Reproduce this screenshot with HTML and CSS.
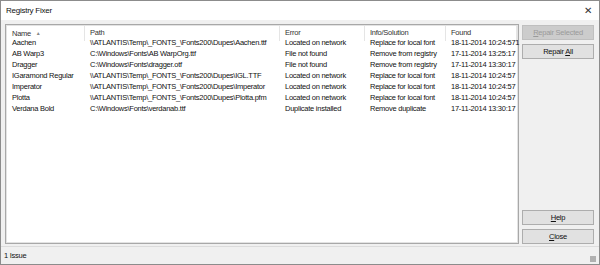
FILE: index.html
```html
<!DOCTYPE html>
<html lang="en">

<head>
    <meta charset="UTF-8">
    <title>Registry Fixer</title>
    <link rel="stylesheet" href="styles.css">
</head>

<body>
    <div class="window">
        <div class="title-bar">
            <span class="title">Registry Fixer</span>
            <span class="close-x">&#x2715;</span>
        </div>

        <div class="main">
            <div class="list-box">
                <div class="grid">
                    <div class="hd">Name <span class="sort">&#x25B2;</span></div>
                    <div class="hd">Path</div>
                    <div class="hd">Error</div>
                    <div class="hd">Info/Solution</div>
                    <div class="hd">Found</div>

                    <div>Aachen</div>
                    <div>\\ATLANTIS\Temp\_FONTS_\Fonts200\Dupes\Aachen.ttf</div>
                    <div>Located on network</div>
                    <div>Replace for local font</div>
                    <div>18-11-2014 10:24:571</div>

                    <div>AB Warp3</div>
                    <div>C:\Windows\Fonts\AB WarpOrg.ttf</div>
                    <div>File not found</div>
                    <div>Remove from registry</div>
                    <div>17-11-2014 13:25:17</div>

                    <div>Dragger</div>
                    <div>C:\Windows\Fonts\dragger.otf</div>
                    <div>File not found</div>
                    <div>Remove from registry</div>
                    <div>17-11-2014 13:30:17</div>

                    <div>IGaramond Regular</div>
                    <div>\\ATLANTIS\Temp\_FONTS_\Fonts200\Dupes\IGL.TTF</div>
                    <div>Located on network</div>
                    <div>Replace for local font</div>
                    <div>18-11-2014 10:24:57</div>

                    <div>Imperator</div>
                    <div>\\ATLANTIS\Temp\_FONTS_\Fonts200\Dupes\Imperator</div>
                    <div>Located on network</div>
                    <div>Replace for local font</div>
                    <div>18-11-2014 10:24:57</div>

                    <div>Plotta</div>
                    <div>\\ATLANTIS\Temp\_FONTS_\Fonts200\Dupes\Plotta.pfm</div>
                    <div>Located on network</div>
                    <div>Replace for local font</div>
                    <div>18-11-2014 10:24:57</div>

                    <div>Verdana Bold</div>
                    <div>C:\Windows\Fonts\verdanab.ttf</div>
                    <div>Duplicate installed</div>
                    <div>Remove duplicate</div>
                    <div>17-11-2014 13:30:17</div>
                </div>
            </div>

            <div class="side">
                <button class="btn" disabled><u>R</u>epair Selected</button>
                <button class="btn">Repair <u>A</u>ll</button>
                <div class="spacer"></div>
                <button class="btn"><u>H</u>elp</button>
                <button class="btn"><u>C</u>lose</button>
            </div>
        </div>

        <div class="status-bar">
            <span>1 Issue</span>
            <span class="grip"></span>
        </div>
    </div>
</body>

</html>
```

FILE: styles.css
```css
/* Window frame */
body {
    margin: 0;
    font-family: "Liberation Sans", Arial, sans-serif;
    font-size: 7.5px;
    letter-spacing: -0.25px;
    color: #111;
}

.window {
    width: 600px;
    height: 265px;
    box-sizing: border-box;
    border: 1px solid #8c8c8c;
    background: #f0f0f0;
    display: flex;
    flex-direction: column;
}

.title-bar {
    height: 19px;
    background: #fff;
    display: flex;
    align-items: center;
    justify-content: space-between;
    padding: 0 7px 0 5px;
    font-size: 8px;
}

.close-x {
    font-size: 10px;
    color: #333;
}

/* Main area */
.main {
    flex: 1;
    display: flex;
    gap: 3px;
    padding: 4px 5px 2px 4px;
}

.list-box {
    flex: 1;
    background: #fff;
    border: 1px solid #a8a8a8;
    box-shadow: inset 0 0 0 1px #e3e3e3;
    padding: 1px;
}

.grid {
    display: grid;
    grid-template-columns: 78px 195px 85px 81px 71px;
    grid-auto-rows: 11px;
    line-height: 11px;
    white-space: nowrap;
}

.grid > div {
    padding-left: 5px;
    overflow: hidden;
}

.grid > div:nth-child(5n) {
    overflow: visible;
}

.grid .hd {
    height: 15px;
    line-height: 14px;
    border-right: 1px solid #e5e5e5;
    color: #333;
    margin-bottom: 3px;
}

.sort {
    font-size: 5px;
    color: #8a8a8a;
    margin-left: 3px;
    vertical-align: 1px;
}

/* Buttons */
.side {
    width: 73px;
    display: flex;
    flex-direction: column;
    gap: 4px;
    padding-top: 1px;
}

.spacer {
    flex: 1;
}

.btn {
    height: 15px;
    padding: 0;
    font: inherit;
    letter-spacing: inherit;
    color: #111;
    background: #e1e1e1;
    border: 1px solid #adadad;
}

.btn:disabled {
    background: #cccccc;
    border-color: #bfbfbf;
    color: #9a9a9a;
}

.btn u {
    text-decoration-thickness: 1px;
}

/* Status bar */
.status-bar {
    height: 17px;
    border-top: 1px solid #dcdcdc;
    display: flex;
    align-items: center;
    justify-content: space-between;
    padding: 0 3px;
}

.grip {
    width: 6px;
    height: 6px;
    align-self: flex-end;
    margin-bottom: 2px;
    background: radial-gradient(circle, #b0b0b0 0.8px, transparent 1px) 0 0 / 2px 2px;
}
```
